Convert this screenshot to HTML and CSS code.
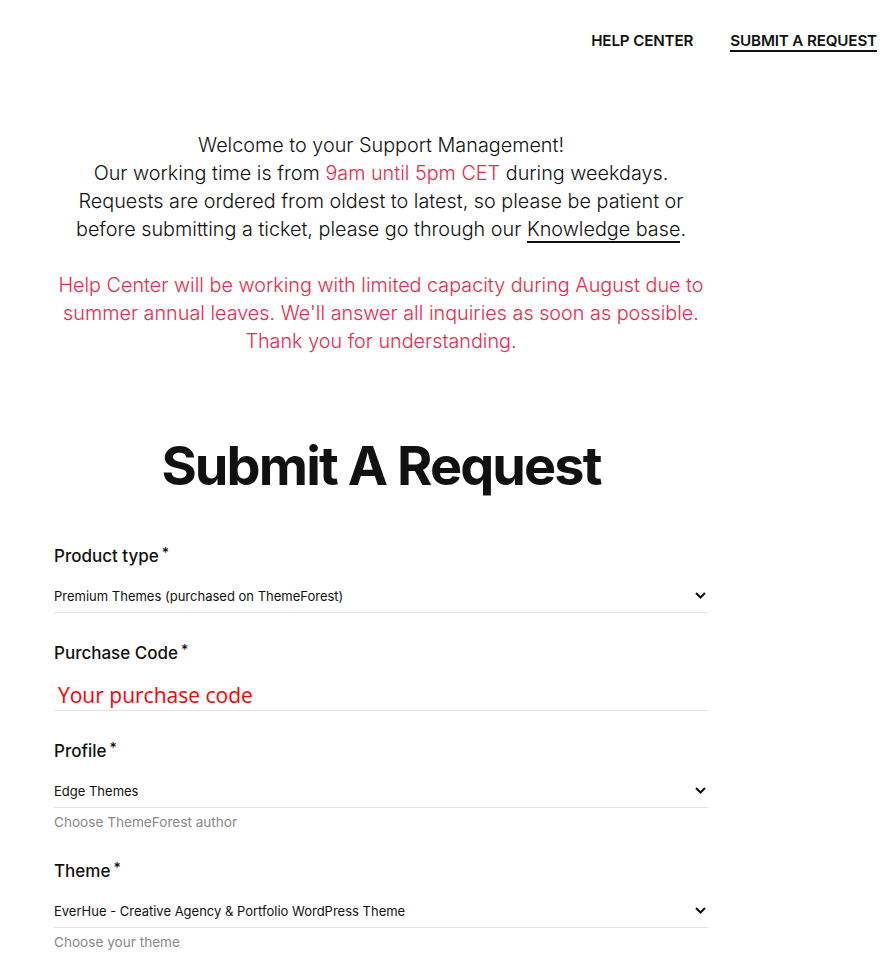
FILE: index.html
```html
<!DOCTYPE html>
<html lang="en">
<head>
  <meta charset="UTF-8" />
  <meta name="viewport" content="width=device-width, initial-scale=1" />
  <title>Submit A Request - Help Center</title>
  <link rel="stylesheet" href="styles.css">
</head>
<body>

  <nav class="top-nav" aria-label="Primary navigation">
    <a href="#">Help Center</a>
    <a href="#" class="active">Submit A Request</a>
  </nav>

  <main class="content">
    <section class="intro">
      <p>
        Welcome to your Support Management!<br>
        Our working time is from <span class="accent">9am until 5pm CET</span> during weekdays.<br>
        Requests are ordered from oldest to latest, so please be patient or<br>
        before submitting a ticket, please go through our <a href="#">Knowledge base</a>.
      </p>
      <p class="notice">
        Help Center will be working with limited capacity during August due to
        summer annual leaves. We'll answer all inquiries as soon as possible.
        Thank you for understanding.
      </p>
    </section>

    <h1 class="page-title">Submit A Request</h1>

    <form class="request-form">
      <div class="field">
        <label>Product type<span class="req">*</span></label>
        <div class="select">
          <span>Premium Themes (purchased on ThemeForest)</span>
          <svg width="11" height="7" viewBox="0 0 11 7"><path d="M1 1l4.5 4.5L10 1" fill="none" stroke="#111" stroke-width="2"/></svg>
        </div>
      </div>

      <div class="field">
        <label>Purchase Code<span class="req">*</span></label>
        <input type="text" class="text-input" placeholder="Your purchase code">
      </div>

      <div class="field">
        <label>Profile<span class="req">*</span></label>
        <div class="select">
          <span>Edge Themes</span>
          <svg width="11" height="7" viewBox="0 0 11 7"><path d="M1 1l4.5 4.5L10 1" fill="none" stroke="#111" stroke-width="2"/></svg>
        </div>
        <p class="hint">Choose ThemeForest author</p>
      </div>

      <div class="field">
        <label>Theme<span class="req">*</span></label>
        <div class="select">
          <span>EverHue - Creative Agency &amp; Portfolio WordPress Theme</span>
          <svg width="11" height="7" viewBox="0 0 11 7"><path d="M1 1l4.5 4.5L10 1" fill="none" stroke="#111" stroke-width="2"/></svg>
        </div>
        <p class="hint">Choose your theme</p>
      </div>
    </form>
  </main>

</body>
</html>
```

FILE: styles.css
```css
/* Base */
body {
  margin: 0;
  font-family: Inter, 'Noto Sans', Arial, sans-serif;
  color: #111;
  background: #fff;
}

/* Top navigation */
.top-nav {
  display: flex;
  justify-content: flex-end;
  gap: 37px;
  padding: 31px 10px 0 0;
  height: 29px;
}

.top-nav a {
  color: #111;
  text-decoration: none;
  text-transform: uppercase;
  font-size: 15.2px;
  font-weight: 600;
  line-height: 19px;
  letter-spacing: -0.01em;
}

.top-nav a.active {
  border-bottom: 2px solid #111;
  height: 19px;
}

/* Content column */
.content {
  width: 654px;
  margin-left: 54px;
}

.intro {
  text-align: center;
  margin-top: 71px;
}

.intro p {
  margin: 0 0 28px;
  font-size: 19.8px;
  line-height: 28px;
  font-weight: 300;
  color: #111;
}

.intro .accent,
.intro .notice {
  color: #f0284a;
}

.intro a {
  color: #111;
  text-decoration: none;
  border-bottom: 2px solid #111;
}

/* Heading */
.page-title {
  text-align: center;
  font-size: 54px;
  font-weight: 700;
  letter-spacing: -0.035em;
  line-height: 70px;
  margin: 76px 0 43px;
}

/* Form */
.field {
  margin-bottom: 28px;
}

.field label {
  display: block;
  font-size: 17px;
  font-weight: 500;
  line-height: 24px;
  margin-bottom: 10px;
}

.req {
  font-size: 14px;
  vertical-align: top;
  margin-left: 3px;
  line-height: 18px;
}

.select {
  display: flex;
  justify-content: space-between;
  align-items: center;
  height: 33px;
  padding: 1px 2px 0 0;
  border-bottom: 1px solid #e2e2e2;
  font-size: 13px;
}

.text-input {
  display: block;
  width: 100%;
  box-sizing: border-box;
  border: none;
  border-bottom: 1px solid #e2e2e2;
  height: 36px;
  padding: 4px 4px 0;
  font-size: 21px;
  font-family: 'Open Sans', Arial, sans-serif;
  outline: none;
}

.text-input::placeholder {
  color: #ff0000;
}

.hint {
  margin: 6px 0 0;
  padding-bottom: 1px;
  font-size: 13.6px;
  line-height: 16px;
  color: #888;
}
```
